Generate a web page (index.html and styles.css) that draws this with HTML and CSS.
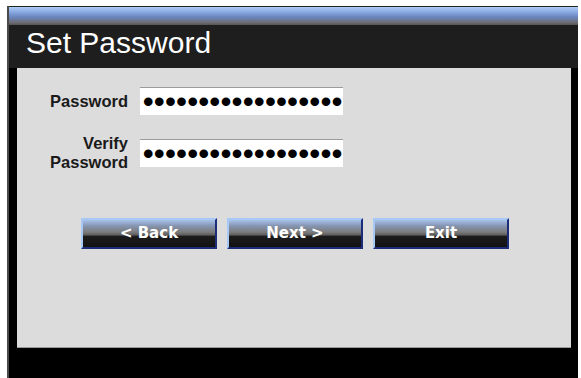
FILE: index.html
```html
<!DOCTYPE html>
<html>
<head>
<meta charset="utf-8">
<link rel="stylesheet" href="styles.css">
</head>
<body>
<div class="window">
  <div class="topbar"></div>
  <div class="titlebar">Set Password</div>
  <div class="panel">
    <div class="form">
      <div class="label">Password</div>
      <div class="field">••••••••••••••••••</div>
      <div class="label">Verify<br>Password</div>
      <div class="field">••••••••••••••••••</div>
    </div>
    <div class="buttons">
      <div class="btn">&lt; Back</div>
      <div class="btn">Next &gt;</div>
      <div class="btn">Exit</div>
    </div>
  </div>
</div>
</body>
</html>
```
FILE: styles.css
```css
html, body {
  margin: 0;
  padding: 0;
  background: #ffffff;
}
.window {
  margin: 6px 0 0 7px;
  width: 571px;
  height: 372px;
  box-sizing: border-box;
  background: #000;
  border-left: 2px solid #4a4a4a;
  display: flex;
  flex-direction: column;
}
.topbar {
  height: 19px;
  box-sizing: border-box;
  border-top: 1px solid #1c281e;
  background: linear-gradient(to bottom, #b0cdf5 0%, #86a6e0 30%, #6a86c0 55%, #6e6e78 85%, #555 100%);
}
.titlebar {
  height: 43px;
  box-sizing: border-box;
  background: #1e1e1e;
  color: #fff;
  font-family: "Liberation Sans", Arial, sans-serif;
  font-size: 30px;
  line-height: 35px;
  padding-left: 17px;
}
.panel {
  margin: 0 7px 0 8px;
  height: 280px;
  box-sizing: border-box;
  background: #dcdcdc;
  border-bottom: 1px solid #9a9a9a;
  padding-top: 19px;
}
.form {
  display: grid;
  grid-template-columns: 111px 203px;
  column-gap: 12px;
  row-gap: 19px;
  align-items: center;
}
.label {
  text-align: right;
  font-family: "Liberation Sans", Arial, sans-serif;
  font-weight: bold;
  font-size: 16.5px;
  line-height: 19px;
  color: #1a1a1a;
}
.field {
  height: 28px;
  box-sizing: border-box;
  background: #fff;
  border-top: 1px solid #9c9c9c;
  padding-left: 3px;
  font-family: "Liberation Sans", Arial, sans-serif;
  font-weight: bold;
  font-size: 30px;
  line-height: 27px;
  letter-spacing: 0.6px;
  color: #000;
  white-space: nowrap;
}
.buttons {
  display: flex;
  gap: 10px;
  margin: 46px 0 0 64px;
}
.btn {
  width: 136px;
  height: 31px;
  box-sizing: border-box;
  border: 2px solid;
  border-color: #a8c8f5 #1c2c78 #1c2c78 #a8c8f5;
  background: linear-gradient(to bottom, #a9c2ea 0%, #8494b0 22%, #7b7b7b 45%, #5a5a5a 56%, #1c1c1c 60%, #121212 100%);
  color: #fff;
  font-family: "DejaVu Sans", Verdana, sans-serif;
  font-weight: bold;
  font-size: 15px;
  line-height: 27px;
  text-align: center;
}
```
